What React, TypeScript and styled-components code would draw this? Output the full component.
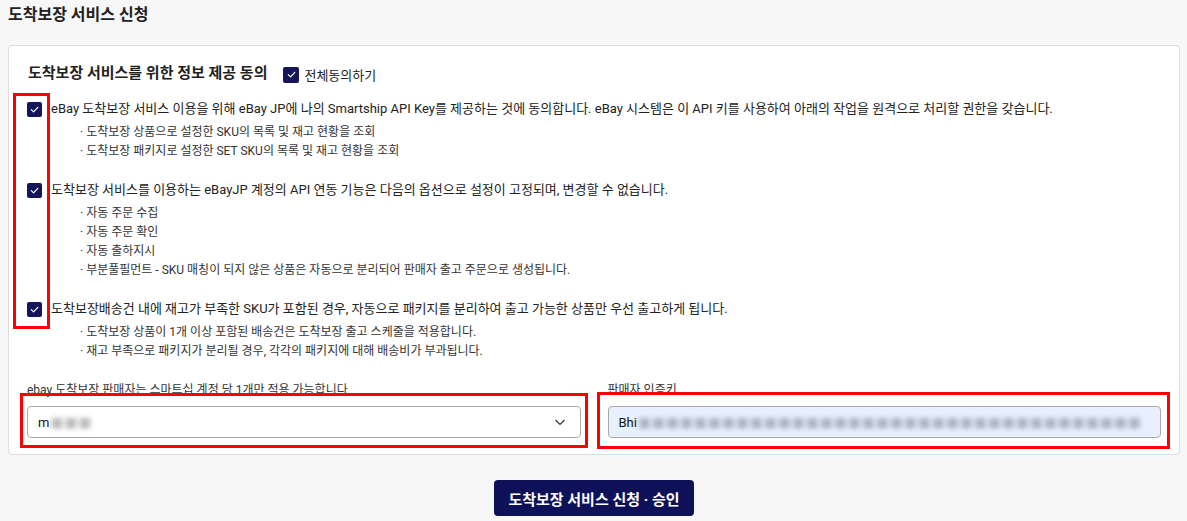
import { FC, ReactNode } from "react";
import styled, { createGlobalStyle } from "styled-components";

const GlobalStyle = createGlobalStyle`
  body {
    margin: 0;
    background: #f7f7f7;
    font-family: Roboto, "Noto Sans CJK KR", sans-serif;
    color: #222;
  }
`;

const Page = styled.div`
  padding: 5px 7px 5px 8px;
`;

const PageTitle = styled.h1`
  margin: 0 0 20px;
  font-size: 16px;
  line-height: 20px;
  font-weight: 700;
`;

const Card = styled.div`
  background: #fff;
  border: 1px solid #dedede;
  border-radius: 4px;
  padding: 15px 18px 16px 18px;
`;

const HeadRow = styled.div`
  display: flex;
  align-items: center;
  gap: 16px;
  padding-left: 1px;
`;

const Heading = styled.h2`
  margin: 0;
  font-size: 15px;
  line-height: 20px;
  font-weight: 700;
`;

const AllAgree = styled.label`
  display: flex;
  align-items: center;
  gap: 5px;
  font-size: 13px;
  margin-top: 4px;
`;

const Box = styled.span<{ $size?: number }>`
  display: inline-flex;
  align-items: center;
  justify-content: center;
  width: ${(p) => p.$size ?? 15}px;
  height: ${(p) => p.$size ?? 15}px;
  flex: none;
  border-radius: 2px;
  background: #15165a;
`;

const CheckBox: FC<{ size?: number }> = ({ size }) => (
  <Box $size={size}>
    <svg width="11" height="11" viewBox="0 0 12 12">
      <polyline
        points="2.5,6.2 5,8.6 9.6,3.6"
        fill="none"
        stroke="#fff"
        strokeWidth="1.3"
        strokeLinecap="round"
        strokeLinejoin="round"
      />
    </svg>
  </Box>
);

const List = styled.div`
  position: relative;
  margin-top: 15px;
  display: flex;
  flex-direction: column;
  gap: 19px;
`;

const Highlight = styled.div<{ $l: number; $t: number; $w: number; $h: number }>`
  position: absolute;
  left: ${(p) => p.$l}px;
  top: ${(p) => p.$t}px;
  width: ${(p) => p.$w}px;
  height: ${(p) => p.$h}px;
  box-sizing: border-box;
  border: 3px solid #ff0000;
  pointer-events: none;
`;

const Row = styled.div`
  display: flex;
  gap: 9px;
  & > span:first-child {
    margin-top: 3px;
  }
`;

const RowBody = styled.div`
  display: flex;
  flex-direction: column;
`;

const RowText = styled.p`
  margin: 0;
  font-size: 13px;
  line-height: 20px;
`;

const SubList = styled.ul`
  margin: 4px 0 0;
  padding: 0 0 0 29px;
  list-style: none;
`;

const SubItem = styled.li`
  font-size: 12px;
  line-height: 19px;
  color: #333;
  &::before {
    content: "· ";
  }
`;

const Fields = styled.div`
  margin-top: 21px;
  display: grid;
  grid-template-columns: 1fr 1fr;
  gap: 27px;
`;

const Field = styled.div`
  position: relative;
  display: flex;
  flex-direction: column;
  gap: 8px;
`;

const FieldLabel = styled.label`
  font-size: 12px;
  line-height: 16px;
  color: #333;
`;

const Control = styled.div<{ $filled?: boolean }>`
  display: flex;
  align-items: center;
  height: 32px;
  box-sizing: border-box;
  padding: 0 14px 0 10px;
  border: 1px solid #a9a9a9;
  border-radius: 4px;
  background: ${(p) => (p.$filled ? "#e8f0fe" : "#fff")};
  font-size: 13px;
  color: #111;
`;

const Masked = styled.span<{ $tint: string }>`
  color: ${(p) => p.$tint};
  filter: blur(2.5px);
  letter-spacing: 1px;
  margin-left: 1px;
`;

const Chevron = styled.svg`
  margin-left: auto;
`;

const Footer = styled.div`
  display: flex;
  justify-content: center;
  margin-top: 25px;
`;

const SubmitButton = styled.button`
  width: 200px;
  height: 36px;
  border: none;
  border-radius: 4px;
  background: #0f1158;
  color: #fff;
  font-family: Roboto, "Noto Sans CJK KR", sans-serif;
  font-size: 15px;
  font-weight: 700;
  cursor: pointer;
`;

const items: { text: string; subs: string[] }[] = [
  {
    text: "eBay 도착보장 서비스 이용을 위해 eBay JP에 나의 Smartship API Key를 제공하는 것에 동의합니다. eBay 시스템은 이 API 키를 사용하여 아래의 작업을 원격으로 처리할 권한을 갖습니다.",
    subs: [
      "도착보장 상품으로 설정한 SKU의 목록 및 재고 현황을 조회",
      "도착보장 패키지로 설정한 SET SKU의 목록 및 재고 현황을 조회",
    ],
  },
  {
    text: "도착보장 서비스를 이용하는 eBayJP 계정의 API 연동 기능은 다음의 옵션으로 설정이 고정되며, 변경할 수 없습니다.",
    subs: [
      "자동 주문 수집",
      "자동 주문 확인",
      "자동 출하지시",
      "부분풀필먼트 - SKU 매칭이 되지 않은 상품은 자동으로 분리되어 판매자 출고 주문으로 생성됩니다.",
    ],
  },
  {
    text: "도착보장배송건 내에 재고가 부족한 SKU가 포함된 경우, 자동으로 패키지를 분리하여 출고 가능한 상품만 우선 출고하게 됩니다.",
    subs: [
      "도착보장 상품이 1개 이상 포함된 배송건은 도착보장 출고 스케줄을 적용합니다.",
      "재고 부족으로 패키지가 분리될 경우, 각각의 패키지에 대해 배송비가 부과됩니다.",
    ],
  },
];

const AgreeRow: FC<{ text: string; children?: ReactNode }> = ({ text, children }) => (
  <Row>
    <CheckBox />
    <RowBody>
      <RowText>{text}</RowText>
      <SubList>{children}</SubList>
    </RowBody>
  </Row>
);

const App: FC = () => {
  return (
    <>
      <GlobalStyle />
      <Page>
        <PageTitle>도착보장 서비스 신청</PageTitle>
        <Card>
          <HeadRow>
            <Heading>도착보장 서비스를 위한 정보 제공 동의</Heading>
            <AllAgree>
              <CheckBox size={16} />
              전체동의하기
            </AllAgree>
          </HeadRow>

          <List>
            {items.map((item, i) => (
              <AgreeRow key={i} text={item.text}>
                {item.subs.map((s, j) => (
                  <SubItem key={j}>{s}</SubItem>
                ))}
              </AgreeRow>
            ))}
            <Highlight $l={-14} $t={-6} $w={37} $h={236} />
          </List>

          <Fields>
            <Field>
              <FieldLabel>ebay 도착보장 판매자는 스마트십 계정 당 1개만 적용 가능합니다</FieldLabel>
              <Control>
                m<Masked $tint="#bbb">■■■</Masked>
                <Chevron width="12" height="12" viewBox="0 0 12 12">
                  <polyline
                    points="1.5,4 6,8.5 10.5,4"
                    fill="none"
                    stroke="#333"
                    strokeWidth="1.2"
                  />
                </Chevron>
              </Control>
              <Highlight $l={-7} $t={11} $w={568} $h={55} />
            </Field>
            <Field>
              <FieldLabel>판매자 인증키</FieldLabel>
              <Control $filled>
                Bhi
                <Masked $tint="#aab3c2">■■■■■■■■■■■■■■■■■■■■■■■■■■■■■■■■■■■■</Masked>
              </Control>
              <Highlight $l={-11} $t={10} $w={573} $h={57} />
            </Field>
          </Fields>
        </Card>
        <Footer>
          <SubmitButton>도착보장 서비스 신청 · 승인</SubmitButton>
        </Footer>
      </Page>
    </>
  );
};

export default App;
